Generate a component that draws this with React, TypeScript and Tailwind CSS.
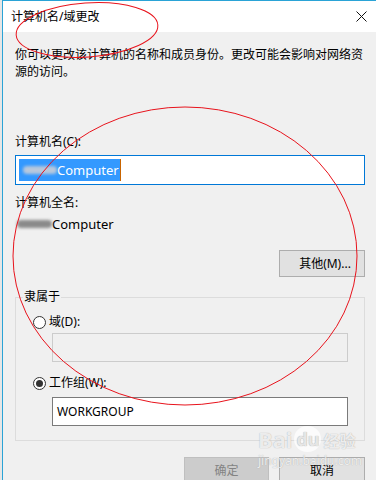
import React from 'react';

const font = { fontFamily: '"Noto Sans", "Noto Sans CJK SC", sans-serif' };

const Radio: React.FC<{ checked?: boolean; label: string }> = ({ checked, label }) => (
  <div className="flex items-center h-[18px] ml-[17px]">
    <div className="w-[13px] h-[13px] rounded-full border border-[#333] bg-white flex items-center justify-center">
      {checked && <div className="w-[7px] h-[7px] rounded-full bg-[#333]"></div>}
    </div>
    <span className="ml-[3px] text-[12px] leading-[18px] text-[#000]">{label}</span>
  </div>
);

const Blurred: React.FC<{ w: number; light?: boolean }> = ({ w, light }) => (
  <span
    className={`inline-block h-[8px] rounded-full blur-[1.5px] ${light ? 'bg-[#b8c8dc]' : 'bg-[#8a8a8a]'}`}
    style={{ width: w }}
  ></span>
);

export default function App() {
  return (
    <div className="relative w-[376px] h-[480px] overflow-hidden bg-[#f0f0f0] flex" style={font}>
      <div className="w-[2px] h-full bg-[#e6e6e6]"></div>
      <div className="flex-1 border-l border-t border-[#2aa3d6] flex flex-col">
        <div className="shrink-0 h-[31px] bg-white flex items-center justify-between pl-[8px] pr-[10px]">
          <span className="text-[12px] leading-[18px] text-[#000]">计算机名/域更改</span>
          <svg width="11" height="11" viewBox="0 0 11 11" className="mr-[-1px]">
            <path d="M0.5 0.5 L10.5 10.5 M10.5 0.5 L0.5 10.5" stroke="#111" strokeWidth="1" />
          </svg>
        </div>
        <div className="flex-1 min-h-0 pl-[12px] pr-[11px]">
          <p className="mt-[14px] text-[12px] leading-[17px] text-[#000]">
            你可以更改该计算机的名称和成员身份。更改可能会影响对网络资
            <br />
            源的访问。
          </p>
          <div className="mt-[53px] text-[12px] leading-[18px] text-[#000]">计算机名(C):</div>
          <div className="mt-[4px] h-[30px] bg-white border border-[#0078d7] flex items-center pl-[3px]">
            <span className="flex items-center h-[22px] bg-[#3399ff] text-white text-[13px] leading-[22px] pr-[1px]">
              <span className="w-[4px]"></span>
              <Blurred w={34} light />
              <span>Computer</span>
            </span>
            <span className="w-[1px] h-[22px] bg-[#c86400]"></span>
          </div>
          <div className="mt-[9px] text-[12px] leading-[18px] text-[#000]">计算机全名:</div>
          <div className="mt-[3px] flex items-center text-[13px] leading-[18px] text-[#000]">
            <span className="w-[2px]"></span>
            <Blurred w={35} />
            <span>Computer</span>
          </div>
          <div className="mt-[17px] flex justify-end">
            <button className="w-[86px] h-[27px] bg-[#e1e1e1] border border-[#adadad] text-[12px] text-[#000] pl-[6px]">
              其他(M)...
            </button>
          </div>
          <div className="mt-[20px] border border-[#dcdcdc] pb-[14px]">
            <div className="-mt-[10px] ml-[7px] w-fit px-[1px] bg-[#f0f0f0] text-[12px] leading-[18px] text-[#000]">
              隶属于
            </div>
            <div className="mt-[7px]">
              <Radio label="域(D):" />
            </div>
            <div className="mt-[2px] ml-[36px] mr-[16px] h-[29px] border border-[#cccccc] bg-[#f0f0f0]"></div>
            <div className="mt-[12px]">
              <Radio checked label="工作组(W):" />
            </div>
            <div className="mt-[5px] ml-[36px] mr-[16px] h-[29px] border border-[#7a7a7a] bg-white flex items-center pl-[4px] text-[12px] text-[#000]">
              WORKGROUP
            </div>
          </div>
          <div className="mt-[16px] flex justify-end gap-[10px]">
            <button className="w-[85px] h-[27px] bg-[#cccccc] border border-[#bfbfbf] text-[12px] text-[#838383]">
              确定
            </button>
            <button className="w-[86px] h-[27px] bg-[#e1e1e1] border border-[#adadad] text-[12px] text-[#000]">
              取消
            </button>
          </div>
        </div>
      </div>

      <div className="absolute left-[258px] top-[426px] pointer-events-none text-white/80 [text-shadow:0_0_1px_#9a9a9a]">
        <div className="flex items-end gap-[2px] text-[22px] leading-[26px] font-bold">
          <span>Bai</span>
          <span className="text-[18px] bg-white/70 rounded-full px-[2px] text-[#e6e6e6]">du</span>
          <span className="text-[16px] leading-[22px]">经验</span>
        </div>
        <div className="text-[12px] leading-[14px] mt-[2px]">jingyan.baidu.com</div>
      </div>

      <svg className="absolute inset-0 pointer-events-none" width="376" height="480">
        <ellipse cx="87" cy="30" rx="71" ry="27" fill="none" stroke="#e8131c" strokeWidth="1" transform="rotate(-4 87 30)" />
        <ellipse cx="185" cy="256" rx="172" ry="149" fill="none" stroke="#e8131c" strokeWidth="1" />
      </svg>
    </div>
  );
}
